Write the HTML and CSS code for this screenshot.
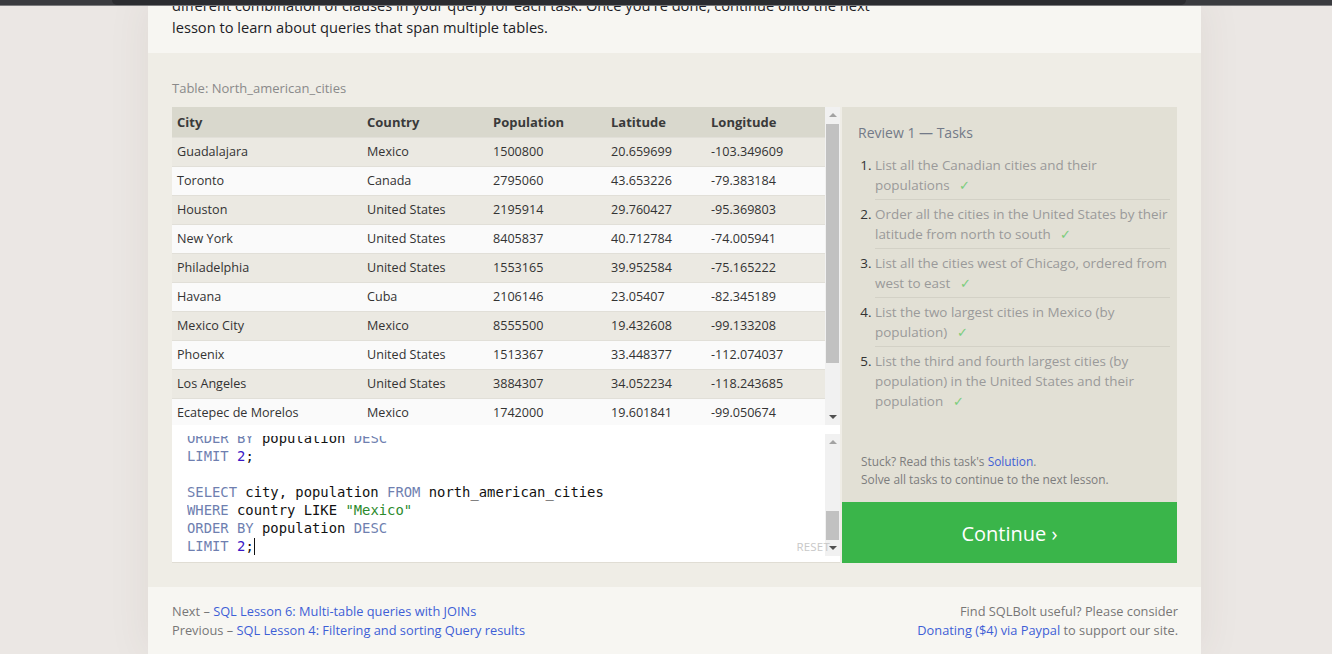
FILE: index.html
```html
<!DOCTYPE html>
<html lang="en">
<head>
<meta charset="utf-8">
<title>SQLBolt - Review 1</title>
<link rel="stylesheet" href="styles.css">
</head>
<body>
<div class="chrome-bar"><div class="chrome-inner"></div></div>
<div class="page">
  <section class="intro">
    <p>different combination of clauses in your query for each task. Once you're done, continue onto the next<br>lesson to learn about queries that span multiple tables.</p>
  </section>

  <section class="exercise">
    <div class="table-label">Table: North_american_cities</div>
    <div class="workspace">
      <div class="left-col">
        <div class="table-box">
          <table class="data">
            <colgroup>
              <col class="c1"><col class="c2"><col class="c3"><col class="c4"><col class="c5">
            </colgroup>
            <thead>
              <tr><th>City</th><th>Country</th><th>Population</th><th>Latitude</th><th>Longitude</th></tr>
            </thead>
            <tbody>
              <tr><td>Guadalajara</td><td>Mexico</td><td>1500800</td><td>20.659699</td><td>-103.349609</td></tr>
              <tr><td>Toronto</td><td>Canada</td><td>2795060</td><td>43.653226</td><td>-79.383184</td></tr>
              <tr><td>Houston</td><td>United States</td><td>2195914</td><td>29.760427</td><td>-95.369803</td></tr>
              <tr><td>New York</td><td>United States</td><td>8405837</td><td>40.712784</td><td>-74.005941</td></tr>
              <tr><td>Philadelphia</td><td>United States</td><td>1553165</td><td>39.952584</td><td>-75.165222</td></tr>
              <tr><td>Havana</td><td>Cuba</td><td>2106146</td><td>23.05407</td><td>-82.345189</td></tr>
              <tr><td>Mexico City</td><td>Mexico</td><td>8555500</td><td>19.432608</td><td>-99.133208</td></tr>
              <tr><td>Phoenix</td><td>United States</td><td>1513367</td><td>33.448377</td><td>-112.074037</td></tr>
              <tr><td>Los Angeles</td><td>United States</td><td>3884307</td><td>34.052234</td><td>-118.243685</td></tr>
              <tr><td>Ecatepec de Morelos</td><td>Mexico</td><td>1742000</td><td>19.601841</td><td>-99.050674</td></tr>
            </tbody>
          </table>
          <div class="vscroll table-scroll">
            <span class="arrow up"></span>
            <div class="track"><div class="thumb"></div></div>
            <span class="arrow down"></span>
          </div>
        </div>

        <div class="editor">
          <div class="code-view">
            <div class="line"><span class="kw">ORDER BY</span> population <span class="kw">DESC</span></div>
            <div class="line"><span class="kw">LIMIT</span> <span class="num">2</span>;</div>
            <div class="line">&nbsp;</div>
            <div class="line"><span class="kw">SELECT</span> city, population <span class="kw">FROM</span> north_american_cities</div>
            <div class="line"><span class="kw">WHERE</span> country LIKE <span class="str">"Mexico"</span></div>
            <div class="line"><span class="kw">ORDER BY</span> population <span class="kw">DESC</span></div>
            <div class="line"><span class="kw">LIMIT</span> <span class="num">2</span>;<span class="cursor"></span></div>
          </div>
          <div class="vscroll editor-scroll">
            <span class="arrow up"></span>
            <div class="track"><div class="thumb"></div></div>
            <span class="arrow down"></span>
          </div>
          <span class="reset">RESET</span>
        </div>
      </div>

      <div class="right-col">
        <div class="tasks">
          <h3 class="tasks-title">Review 1 — Tasks</h3>
          <ol class="task-list">
            <li>List all the Canadian cities and their populations <span class="check">✓</span></li>
            <li>Order all the cities in the United States by their latitude from north to south <span class="check">✓</span></li>
            <li>List all the cities west of Chicago, ordered from west to east <span class="check">✓</span></li>
            <li>List the two largest cities in Mexico (by population) <span class="check">✓</span></li>
            <li>List the third and fourth largest cities (by population) in the United States and their population <span class="check">✓</span></li>
          </ol>
          <div class="stuck">
            Stuck? Read this task's <a href="#">Solution</a>.<br>
            Solve all tasks to continue to the next lesson.
          </div>
        </div>
        <a class="continue" href="#">Continue ›</a>
      </div>
    </div>
  </section>

  <footer class="footer">
    <div class="nav-links">
      Next – <a href="#">SQL Lesson 6: Multi-table queries with JOINs</a><br>
      Previous – <a href="#">SQL Lesson 4: Filtering and sorting Query results</a>
    </div>
    <div class="donate">
      Find SQLBolt useful? Please consider<br>
      <a href="#">Donating ($4) via Paypal</a> to support our site.
    </div>
  </footer>
</div>
</body>
</html>
```

FILE: styles.css
```css
html, body {
  margin: 0;
  padding: 0;
  height: 100%;
  overflow: hidden;
}
body {
  background: #ebe7e4;
  font-family: "Open Sans", "Noto Sans", sans-serif;
  color: #333;
}
a { color: #3e5fd6; text-decoration: none; }

.chrome-bar {
  position: fixed;
  top: 0; left: 0; right: 0;
  height: 5px;
  background: #3a3b3f;
  border-bottom: 1px solid #7b7b7d;
  z-index: 10;
}
.chrome-inner {
  margin: 0 146px 0 112px;
  height: 5px;
  background: #2b2c30;
  border-radius: 0 0 6px 6px;
}

.page {
  width: 1053px;
  margin-left: 148px;
  box-shadow: 0 0 40px rgba(90, 70, 50, 0.08);
}

.intro {
  height: 53px;
  background: #f7f6f2;
  overflow: hidden;
  display: flex;
  flex-direction: column;
  justify-content: flex-end;
  padding: 0 24px;
  box-sizing: border-box;
}
.intro p {
  margin: 0 0 15px 0;
  font-size: 14.65px;
  line-height: 22px;
  color: #1d1d26;
}

.exercise {
  background: #efede6;
  padding: 26px 24px 24px 24px;
}
.table-label {
  font-size: 13px;
  line-height: 18px;
  color: #8a8a8a;
  margin-bottom: 10px;
}
.workspace {
  display: flex;
  gap: 2px;
}
.left-col {
  width: 668px;
  display: flex;
  flex-direction: column;
}
.right-col {
  width: 335px;
  display: flex;
  flex-direction: column;
}

.table-box {
  height: 318px;
  overflow: hidden;
  display: flex;
  background: #fafafa;
}
table.data {
  width: 653px;
  table-layout: fixed;
  border-collapse: collapse;
  font-size: 12.6px;
  color: #333;
  align-self: flex-start;
}
col.c1 { width: 190px; }
col.c2 { width: 126px; }
col.c3 { width: 118px; }
col.c4 { width: 100px; }
col.c5 { width: 119px; }
table.data th {
  text-align: left;
  font-weight: 700;
  font-size: 13px;
  background: #d9d8cd;
  height: 30px;
  padding: 0 5px;
  color: #3a3a3a;
}
table.data td {
  height: 29px;
  padding: 0 5px 1px 5px;
  border-top: 1px solid #e1dfd8;
  white-space: nowrap;
  box-sizing: border-box;
}
table.data tbody tr:nth-child(odd) td { background: #ebe9e2; }
table.data tbody tr:nth-child(even) td { background: #fafafa; }

.vscroll {
  width: 15px;
  background: #f1f1f1;
  display: flex;
  flex-direction: column;
  align-items: center;
  box-sizing: border-box;
}
.vscroll .arrow {
  width: 0; height: 0;
  border-left: 4px solid transparent;
  border-right: 4px solid transparent;
  flex: none;
}
.vscroll .arrow.up {
  border-bottom: 4px solid #a3a3a3;
  margin: 6px 0 7px;
}
.vscroll .arrow.down {
  border-top: 4px solid #505050;
  margin: 7px 0 6px;
}
.vscroll .track {
  flex: 1;
  width: 100%;
  position: relative;
}
.vscroll .thumb {
  position: absolute;
  left: 1px; right: 1px;
  background: #c1c1c1;
}
.table-scroll .thumb { top: 0; height: 239px; }

.editor {
  height: 138px;
  background: #fff;
  border-bottom: 1px solid #e0ddd4;
  box-sizing: border-box;
  display: flex;
  position: relative;
  padding: 11px 0 7px 15px;
}
.code-view {
  flex: 1;
  overflow: hidden;
  display: flex;
  flex-direction: column;
  justify-content: flex-end;
  font-family: "DejaVu Sans Mono", "Liberation Mono", monospace;
  font-size: 13.85px;
  line-height: 18px;
  color: #111;
}
.line { white-space: pre; height: 18px; flex: none; }
.kw { color: #6f7fb0; }
.num { color: #3a17c6; }
.str { color: #2c8a2c; }
.cursor {
  display: inline-block;
  width: 1px;
  height: 17px;
  background: #111;
  vertical-align: -4px;
}
.editor-scroll {
  margin: -2px 0 0 0;
  height: 122px;
}
.editor-scroll .thumb { top: 60px; height: 29px; }
.reset {
  position: absolute;
  right: 10px;
  bottom: 8px;
  font-size: 11.5px;
  color: #c8c8c8;
  letter-spacing: 0.2px;
  z-index: 2;
}

.tasks {
  height: 395px;
  background: #e2e0d5;
  padding: 16px 7px 14px 16px;
  box-sizing: border-box;
  display: flex;
  flex-direction: column;
}
.tasks-title {
  margin: 0;
  font-size: 14px;
  font-weight: 400;
  line-height: 20px;
  color: #737a88;
}
.task-list {
  margin: 8px 0 0 0;
  padding-left: 17px;
  font-size: 13.45px;
  line-height: 20px;
  color: #9a9a9a;
}
.task-list li {
  padding: 4px 0;
  border-bottom: 1px solid #d3d1c6;
}
.task-list li:last-child { border-bottom: none; }
.task-list li::marker { color: #333; }
.check {
  color: #7ccd7c;
  margin-left: 6px;
}
.stuck {
  margin-top: auto;
  padding-left: 3px;
  font-size: 11.9px;
  line-height: 18px;
  color: #7d7d7d;
}
.continue {
  height: 61px;
  background: #3ab54a;
  color: #fff;
  font-size: 20px;
  display: flex;
  align-items: center;
  justify-content: center;
  padding-top: 1px;
  box-sizing: border-box;
}

.footer {
  background: #f7f6f2;
  height: 67px;
  padding: 15px 23px 0 24px;
  box-sizing: border-box;
  display: flex;
  justify-content: space-between;
  font-size: 12.8px;
  line-height: 19px;
  color: #777;
}
.donate { text-align: right; }
```
